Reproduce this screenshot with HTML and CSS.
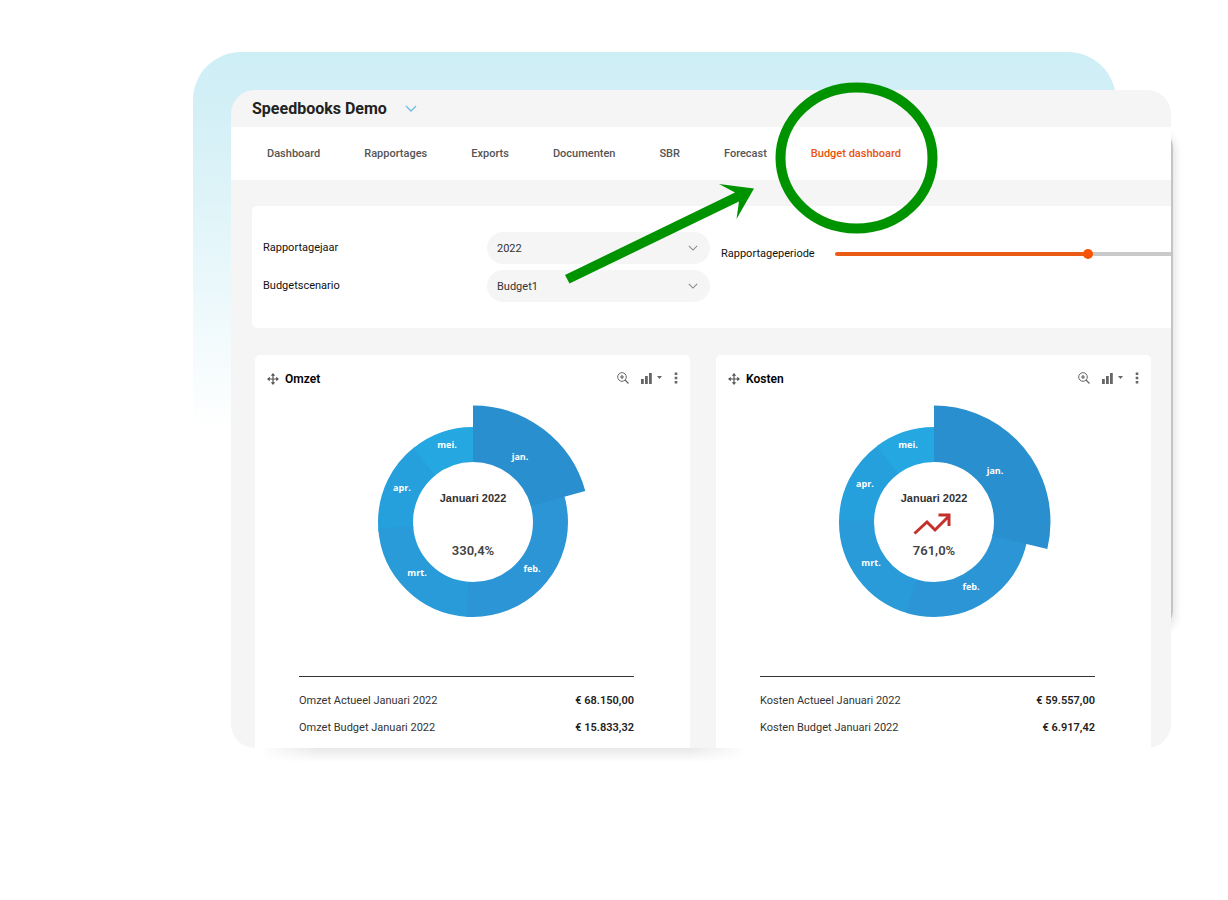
FILE: index.html
```html
<!DOCTYPE html>
<html lang="nl">
<head>
<meta charset="utf-8">
<title>Speedbooks Demo</title>
<link rel="stylesheet" href="styles.css">
</head>
<body>
<svg class="sprite" aria-hidden="true">
  <symbol id="move" viewBox="0 0 12 12"><path d="M6 1v10M1 6h10" fill="none" stroke="currentColor" stroke-width="1.2"/><path d="M6 0l2.2 2.8H3.8zM6 12l2.2-2.8H3.8zM0 6l2.8-2.2v4.4zM12 6L9.2 3.8v4.4z" fill="currentColor"/></symbol>
  <symbol id="zoom" viewBox="0 0 12 12"><circle cx="5" cy="5" r="4.3" fill="none" stroke="currentColor"/><path d="M8 8l3.5 3.5M5 3v4M3 5h4" fill="none" stroke="currentColor" stroke-width="1.2"/></symbol>
  <symbol id="bars" viewBox="0 0 11 12"><path d="M0 7h2.800v5H0zM4 4h2.800v8H4zM8 1h2.800v11H8z" fill="currentColor"/></symbol>
  <symbol id="caret" viewBox="0 0 5 3"><path d="M0 0h5L2.5 3z" fill="currentColor"/></symbol>
  <symbol id="dots" viewBox="0 0 4 12"><path d="M.7.5h2.600v2.400H.7zM.7 4.800h2.600v2.400H.7zM.7 9.100h2.600v2.400H.7z" fill="currentColor"/></symbol>
  <symbol id="chevron" viewBox="0 0 12 7"><path d="M1 1l5 5 5-5" fill="none" stroke="currentColor" stroke-width="1.3"/></symbol>
</svg>
<main class="stage">
  <div class="frame">
    <div class="window">
      <header class="topbar">
        <h1 class="brand">Speedbooks Demo</h1>
        <button class="brand-toggle" aria-label="Kies administratie"><svg width="12" height="7"><use href="#chevron"/></svg></button>
      </header>
      <nav class="tabs">
        <a href="#">Dashboard</a>
        <a href="#">Rapportages</a>
        <a href="#">Exports</a>
        <a href="#">Documenten</a>
        <a href="#">SBR</a>
        <a href="#">Forecast</a>
        <a href="#" class="active" aria-current="page">Budget dashboard</a>
      </nav>
      <form class="filters">
        <div class="choices">
          <label for="year">Rapportagejaar</label>
          <div class="picker">
            <select id="year"><option>2022</option></select>
            <svg width="10" height="6"><use href="#chevron"/></svg>
          </div>
          <label for="scenario">Budgetscenario</label>
          <div class="picker">
            <select id="scenario"><option>Budget1</option></select>
            <svg width="10" height="6"><use href="#chevron"/></svg>
          </div>
        </div>
        <div class="period">
          <label for="period">Rapportageperiode</label>
          <input id="period" type="range" min="0" max="100" value="76">
        </div>
      </form>
      <div class="cards">
        <section class="card">
          <header class="card-head">
            <svg class="icon" width="12" height="12"><use href="#move"/></svg>
            <h2>Omzet</h2>
            <div class="tools">
              <button aria-label="Inzoomen"><svg width="12" height="12"><use href="#zoom"/></svg></button>
              <button class="type" aria-label="Grafiektype"><svg width="11" height="12"><use href="#bars"/></svg><svg width="5" height="3"><use href="#caret"/></svg></button>
              <button aria-label="Meer"><svg width="4" height="12"><use href="#dots"/></svg></button>
            </div>
          </header>
          <svg class="donut" viewBox="-120 -120 240 240" width="240" height="240" role="img" aria-label="Omzet per maand">
            <g class="slices">
              <circle class="apr" r="77.5" pathLength="360" stroke-dasharray="58 302" stroke-dashoffset="-264"/>
              <circle class="mei" r="77.5" pathLength="360" stroke-dasharray="39 321" stroke-dashoffset="-321"/>
              <circle class="mrt" r="77.5" pathLength="360" stroke-dasharray="83 277" stroke-dashoffset="-183"/>
              <circle class="feb" r="77.5" pathLength="360" stroke-dasharray="111 249" stroke-dashoffset="-73"/>
              <circle class="jan" r="88.25" pathLength="360" stroke-dasharray="74.5 285.5"/>
            </g>
            <g class="months">
              <text x="47" y="-62">jan.</text>
              <text x="59" y="50">feb.</text>
              <text x="-56" y="54">mrt.</text>
              <text x="-71" y="-31">apr.</text>
              <text x="-26" y="-74">mei.</text>
            </g>
            <text class="when" y="-20">Januari 2022</text>
            <text class="share" y="33">330,4%</text>
          </svg>
          <table class="totals">
            <tr><th scope="row">Omzet Actueel Januari 2022</th><td>€ 68.150,00</td></tr>
            <tr><th scope="row">Omzet Budget Januari 2022</th><td>€ 15.833,32</td></tr>
          </table>
        </section>
        <section class="card">
          <header class="card-head">
            <svg class="icon" width="12" height="12"><use href="#move"/></svg>
            <h2>Kosten</h2>
            <div class="tools">
              <button aria-label="Inzoomen"><svg width="12" height="12"><use href="#zoom"/></svg></button>
              <button class="type" aria-label="Grafiektype"><svg width="11" height="12"><use href="#bars"/></svg><svg width="5" height="3"><use href="#caret"/></svg></button>
              <button aria-label="Meer"><svg width="4" height="12"><use href="#dots"/></svg></button>
            </div>
          </header>
          <svg class="donut" viewBox="-120 -120 240 240" width="240" height="240" role="img" aria-label="Kosten per maand">
            <g class="slices">
              <circle class="apr" r="77.5" pathLength="360" stroke-dasharray="55 305" stroke-dashoffset="-269"/>
              <circle class="mei" r="77.5" pathLength="360" stroke-dasharray="37 323" stroke-dashoffset="-323"/>
              <circle class="mrt" r="77.5" pathLength="360" stroke-dasharray="75 285" stroke-dashoffset="-196"/>
              <circle class="feb" r="77.5" pathLength="360" stroke-dasharray="95 265" stroke-dashoffset="-102"/>
              <circle class="jan" r="88.25" pathLength="360" stroke-dasharray="103.5 256.5"/>
            </g>
            <g class="months">
              <text x="61" y="-48">jan.</text>
              <text x="37" y="68">feb.</text>
              <text x="-63" y="44">mrt.</text>
              <text x="-69" y="-35">apr.</text>
              <text x="-26" y="-74">mei.</text>
            </g>
            <text class="when" y="-20">Januari 2022</text>
            <path class="trend" d="M-19.500 11.500L-7 0L1 8L14-5M4.500-7H15V4"/>
            <text class="share" y="33">761,0%</text>
          </svg>
          <table class="totals">
            <tr><th scope="row">Kosten Actueel Januari 2022</th><td>€ 59.557,00</td></tr>
            <tr><th scope="row">Kosten Budget Januari 2022</th><td>€ 6.917,42</td></tr>
          </table>
        </section>
      </div>
    </div>
    <svg class="callout" viewBox="560 80 380 210" width="380" height="210" aria-hidden="true">
      <ellipse cx="856.5" cy="158" rx="76" ry="70.500"/>
      <path d="M565 275L735 192.500L719 184L754 188.500L736.500 219L739 201.500L569.500 283.500Z"/>
    </svg>
  </div>
</main>
</body>
</html>
```

FILE: styles.css
```css
* { box-sizing: border-box; }
body { margin: 0; background: #fff; font-family: Roboto, "Liberation Sans", sans-serif; font-size: 11px; color: #222; }
.sprite { position: absolute; width: 0; height: 0; }
.stage { position: relative; padding: 90px 57px 24px 231px; }
.stage::before {
  content: ""; position: absolute; left: 193px; right: 112px; top: 52px; height: 378px;
  border-radius: 48px 48px 0 0;
  background: linear-gradient(#ceeef6, #d7f1f7 25%, #fff);
}
.frame { position: relative; isolation: isolate; }
.frame::before {
  content: ""; position: absolute; z-index: -1; right: -2px; top: 38px; bottom: 118px; width: 60px;
  border-radius: 20px; background: #c4c4c4; box-shadow: 2px 3px 8px rgba(0, 0, 0, .12);
}
.frame::after {
  content: ""; position: absolute; left: 28px; top: 100%; width: 52%; height: 14px;
  background: linear-gradient(rgba(0, 0, 0, .09), rgba(0, 0, 0, 0));
  -webkit-mask-image: linear-gradient(90deg, transparent, #000 12%, #000 88%, transparent);
}
.window { overflow: hidden; border-radius: 24px; background: #f5f5f5; }

.topbar { display: flex; align-items: center; gap: 18px; height: 37px; padding: 0 21px; }
.brand { margin: 0; font-size: 16px; font-weight: 700; line-height: 20px; color: #222; }
.brand-toggle { display: flex; padding: 0; border: 0; background: none; color: #6bbde3; }

.tabs { display: flex; align-items: center; gap: 44px; height: 53px; padding: 0 36px; background: #fff; }
.tabs a { color: #555; font-weight: 500; line-height: 16px; text-decoration: none; white-space: nowrap; }
.tabs .active { color: #e8540f; }

.filters { display: flex; gap: 11px; margin: 26px 0 27px 21px; padding: 26px 0 26px 11px; border-radius: 5px 0 0 5px; background: #fff; }
.choices { display: grid; grid-template-columns: 224px 223px; row-gap: 6px; align-items: center; }
.filters label { font-weight: 400; line-height: 16px; color: #111; }
.picker { position: relative; }
.picker select { display: block; appearance: none; width: 100%; height: 32px; padding: 0 30px 0 10px; border: 0; border-radius: 16px; background: #f5f5f5; color: #333; font: inherit; }
.picker svg { position: absolute; right: 12px; top: 13px; color: #888; pointer-events: none; }
.period { display: grid; grid-template-columns: 114px 1fr; align-items: center; flex: 1; height: 43px; }
.period input { appearance: none; width: 100%; height: 10px; margin: 0; background: none; }
.period input::-webkit-slider-runnable-track { height: 4px; border-radius: 2px 0 0 2px; background: linear-gradient(90deg, #ea5b14 76%, #c9c9c9 76%); }
.period input::-webkit-slider-thumb { appearance: none; width: 10px; height: 10px; margin-top: -3px; border-radius: 50%; background: #fa5400; }

.cards { display: grid; grid-template-columns: 1fr 1fr; gap: 26px; padding: 0 20px 0 24px; }
.card { padding-bottom: 7px; border-radius: 5px 5px 0 0; background: #fff; }
.card-head { display: flex; align-items: center; gap: 6px; height: 47px; padding: 0 12px; color: #555; }
.card-head h2 { margin: 0; color: #000; font-size: 12px; font-weight: 600; line-height: 16px; }
.tools { display: flex; align-items: center; gap: 12px; margin-left: auto; padding-bottom: 2px; }
.tools button { display: flex; align-items: center; padding: 0; border: 0; background: none; color: #666; }
.tools .type { gap: 5px; }
.donut { display: block; margin: 0 auto 34px; }
.slices { fill: none; stroke-width: 35; transform: rotate(-90deg); }
.jan { stroke: #2a8fce; stroke-width: 56.500; }
.feb { stroke: #2b95d5; }
.mrt { stroke: #289bd8; }
.apr { stroke: #26a0dc; }
.mei { stroke: #25a7e2; }
.donut text { text-anchor: middle; }
.months { fill: #fff; font: 700 9px "Open Sans", sans-serif; }
.when { fill: #333; font: 700 11px "Liberation Sans", sans-serif; }
.share { fill: #444; font: 600 13px Roboto, sans-serif; }
.trend { fill: none; stroke: #c4302b; stroke-width: 3; }

.totals { width: calc(100% - 100px); margin: 0 56px 0 44px; padding-top: 10px; border-top: 1px solid #333; border-spacing: 0; }
.totals th, .totals td { height: 27px; padding: 0; white-space: nowrap; }
.totals th { font-weight: 400; text-align: left; color: #333; }
.totals td { font-weight: 600; text-align: right; }

.callout { position: absolute; left: 329px; top: -10px; pointer-events: none; fill: #009300; }
.callout ellipse { fill: none; stroke: #009300; stroke-width: 10; }
```
